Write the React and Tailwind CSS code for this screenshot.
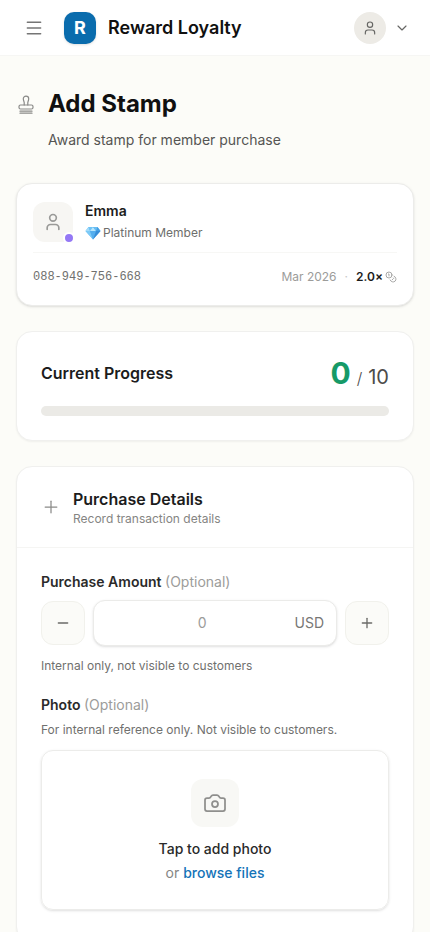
import { Camera, ChevronDown, Coins, Menu, Minus, Plus, User } from "lucide-react";

/* ================= COMPONENTS ================= */

function StampIcon({ className }) {
    return (
        <svg
            viewBox="0 0 20 20"
            fill="none"
            stroke="currentColor"
            strokeWidth="1.2"
            strokeLinecap="round"
            strokeLinejoin="round"
            className={className}
            aria-hidden="true"
        >
            <path d="M8.2 11V8.600c0-1-.9-2-.9-3.800a2.700 2.700 0 0 1 5.400 0c0 1.800-.9 2.800-.9 3.800V11" />
            <rect x="3" y="11" width="14" height="4" rx="1.5" />
            <path d="M4 17.200h12M4 19.200h12" />
        </svg>
    );
}

function Gem() {
    return (
        <svg viewBox="0 0 32 28" className="h-3.5 w-4" aria-hidden="true">
            <path d="M7 2h18l6 8-15 17L1 10z" fill="#5bb5f2" />
            <path d="M7 2l3 8H1z" fill="#a3dcfa" />
            <path d="M7 2h9l-6 8z" fill="#6fc3f6" />
            <path d="M16 2l6 8H10z" fill="#b8e6fc" />
            <path d="M16 2h9l-3 8z" fill="#69bdf2" />
            <path d="M25 2l6 8h-9z" fill="#459fe2" />
            <path d="M1 10h9l6 17z" fill="#7ccaf7" />
            <path d="M10 10h12l-6 17z" fill="#54aeee" />
            <path d="M22 10h9L16 27z" fill="#368dd8" />
        </svg>
    );
}

function StepButton({ label, children }) {
    return (
        <button
            type="button"
            aria-label={label}
            className="flex size-11 shrink-0 items-center justify-center rounded-xl border border-[#f1f1ec] bg-[#fbfbf8] text-[#6b6b68]"
        >
            {children}
        </button>
    );
}

function Optional() {
    return <span className="font-normal text-[#9c9c9a]">(Optional)</span>;
}

/* ================= SECTIONS ================= */

function TopBar() {
    return (
        <header className="flex h-14 items-center border-b border-[#f6f6f4] bg-white pr-5 pl-6">
            <button type="button" aria-label="Open menu" className="text-[#757575]">
                <Menu size={20} strokeWidth={1.75} />
            </button>
            <a href="#" className="ml-5 flex items-center gap-3">
                <span className="flex size-8 items-center justify-center rounded-[10px] bg-[#0a6cad] text-lg font-bold text-white shadow-sm">
                    R
                </span>
                <span className="text-lg font-semibold text-[#101010]">Reward Loyalty</span>
            </a>
            <button
                type="button"
                aria-label="Account"
                className="ml-auto flex items-center gap-2 text-[#666664]"
            >
                <span className="flex size-8 items-center justify-center rounded-full bg-[#edebe6]">
                    <User size={16} strokeWidth={1.75} />
                </span>
                <ChevronDown size={16} strokeWidth={1.75} />
            </button>
        </header>
    );
}

function MemberCard() {
    return (
        <section className="rounded-2xl border border-[#ececea] bg-white p-4 shadow">
            <div className="flex items-center gap-3 border-b border-[#f7f7f5] pb-2">
                <div className="relative flex size-10 items-center justify-center rounded-xl bg-[#f7f6f3] text-[#9a9a98]">
                    <User size={20} strokeWidth={2} />
                    <span className="absolute -right-0.5 -bottom-0.5 size-3 rounded-full border-2 border-white bg-[#9478f5]" />
                </div>
                <div>
                    <h2 className="text-sm leading-[22px] font-semibold text-[#1c1c1c]">Emma</h2>
                    <p className="flex items-center gap-0.5 text-xs leading-[22px] text-[#6e6e6c]">
                        <Gem />
                        Platinum Member
                    </p>
                </div>
            </div>
            <div className="flex items-center justify-between pt-4 pb-1 text-xs leading-4">
                <span className="font-['Liberation_Mono',monospace] text-[#70706e]">
                    088-949-756-668
                </span>
                <div className="flex items-center gap-2 text-[#9c9c9a]">
                    <span>Mar 2026</span>
                    <span className="text-[#c8c8c6]">·</span>
                    <span className="flex items-center gap-0.5">
                        <span className="font-semibold text-[#1c1c1c]">2.0×</span>
                        <Coins size={12} strokeWidth={1.75} />
                    </span>
                </div>
            </div>
        </section>
    );
}

function ProgressCard({ stamps, total }) {
    return (
        <section className="rounded-2xl border border-[#f0f0ee] bg-white p-6 shadow-xs">
            <div className="mb-4 flex h-[34px] items-center justify-between">
                <h2 className="font-semibold text-[#1c1c1c]">Current Progress</h2>
                <p className="flex items-baseline gap-1.5 text-xl text-[#4c4c4a]">
                    <span className="text-3xl font-bold text-[#169a68]">{stamps}</span>
                    <span className="text-base font-light">/</span>
                    <span>{total}</span>
                </p>
            </div>
            <div className="h-2.5 overflow-hidden rounded-full bg-[#ebeae6]">
                <div
                    className="h-full rounded-full bg-[#169a68]"
                    style={{ width: `${(stamps / total) * 100}%` }}
                />
            </div>
        </section>
    );
}

function PurchaseCard() {
    return (
        <section className="rounded-2xl border border-[#f0f0ee] bg-white shadow-xs">
            <div className="flex items-center gap-3 border-b border-[#f5f5f3] px-6 py-5">
                <Plus size={20} strokeWidth={1.5} className="text-[#8a8a88]" />
                <div>
                    <h2 className="leading-6 font-semibold text-[#1c1c1c]">Purchase Details</h2>
                    <p className="text-xs leading-4 text-[#858583]">Record transaction details</p>
                </div>
            </div>

            <form className="px-6 pt-6 pb-8">
                <label htmlFor="amount" className="block text-sm font-semibold text-[#2a2a2a]">
                    Purchase Amount <Optional />
                </label>
                <div className="mt-2 flex items-center gap-2">
                    <StepButton label="Decrease amount">
                        <Minus size={16} />
                    </StepButton>
                    <div className="flex h-[46px] min-w-0 flex-1 items-center rounded-xl border border-[#ebebe9] bg-white pr-3 shadow">
                        <input
                            id="amount"
                            type="text"
                            inputMode="decimal"
                            placeholder="0"
                            className="w-full min-w-0 flex-1 pl-4 text-center text-sm outline-none placeholder:text-[#9c9c9a]"
                        />
                        <span className="text-sm text-[#777775]">USD</span>
                    </div>
                    <StepButton label="Increase amount">
                        <Plus size={16} />
                    </StepButton>
                </div>
                <p className="mt-3 text-xs leading-4 text-[#70706e]">
                    Internal only, not visible to customers
                </p>

                <label
                    htmlFor="photo"
                    className="mt-5 block text-sm leading-[22px] font-semibold text-[#2a2a2a]"
                >
                    Photo <Optional />
                </label>
                <p className="mt-1 text-xs leading-5 text-[#70706e]">
                    For internal reference only. Not visible to customers.
                </p>
                <label
                    htmlFor="photo"
                    className="mt-2.5 flex cursor-pointer flex-col items-center rounded-xl border border-[#ececea] px-6 pt-7 pb-6 text-sm shadow-sm"
                >
                    <span className="mb-2.5 flex size-12 items-center justify-center rounded-xl bg-[#f8f8f5] text-[#8f8f8d]">
                        <Camera size={24} strokeWidth={1.75} />
                    </span>
                    <span className="leading-6 font-medium text-[#2a2a2a]">Tap to add photo</span>
                    <span className="leading-6 text-[#858583]">
                        or <span className="font-medium text-[#1473b8]">browse files</span>
                    </span>
                    <input id="photo" type="file" accept="image/*" className="sr-only" />
                </label>
            </form>
        </section>
    );
}

/* ================= PAGE ================= */

export default function App() {
    return (
        <div className="min-h-screen bg-[#fcfcf8] font-['Inter',sans-serif]">
            <TopBar />
            <main className="px-4 pt-8 pb-8">
                <div className="flex gap-3">
                    <StampIcon className="mt-1.5 size-5 text-[#8a8a88]" />
                    <div>
                        <h1 className="text-2xl font-bold text-[#101010]">Add Stamp</h1>
                        <p className="mt-2 text-sm leading-6 text-[#555553]">
                            Award stamp for member purchase
                        </p>
                    </div>
                </div>
                <div className="mt-[31px] space-y-[25px]">
                    <MemberCard />
                    <ProgressCard stamps={0} total={10} />
                    <PurchaseCard />
                </div>
            </main>
        </div>
    );
}
